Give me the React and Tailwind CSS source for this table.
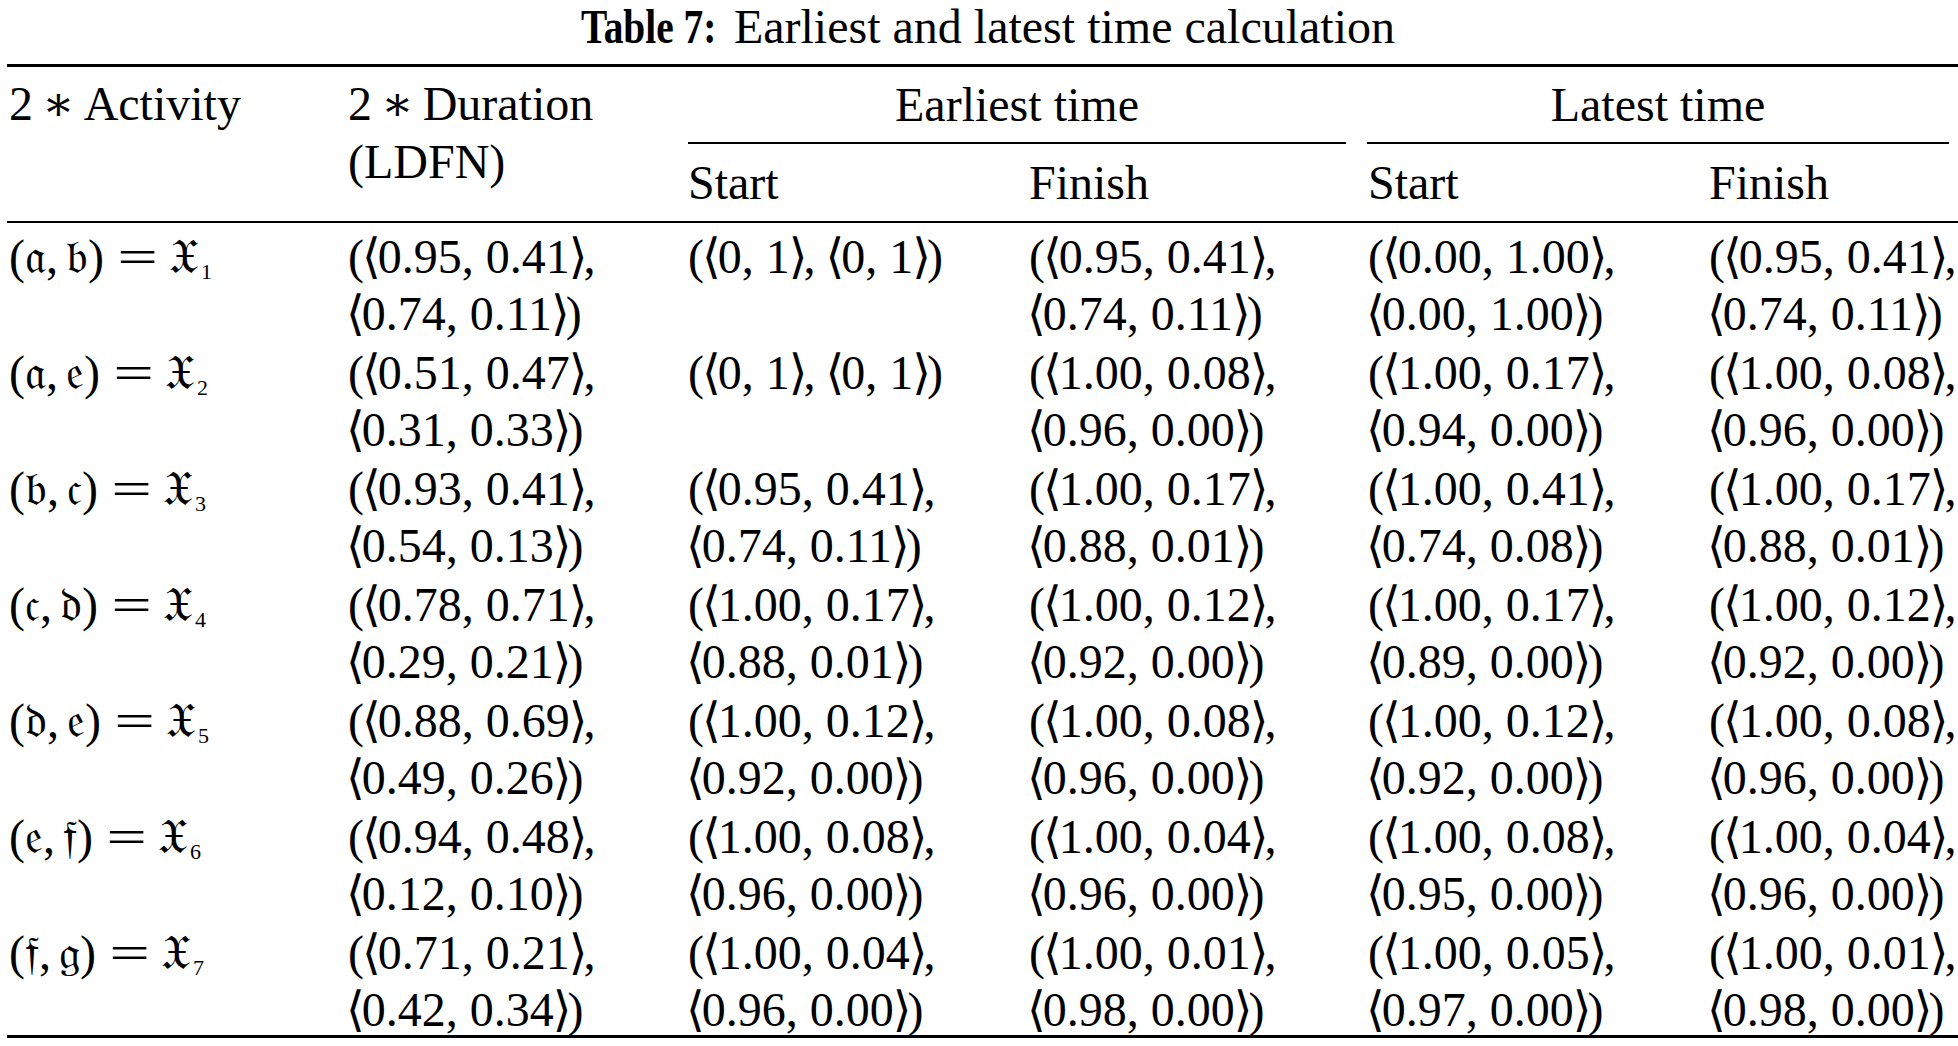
import React from "react"

const pair = (a, b, c, d) => [`(⟨${a}, ${b}⟩,`, `⟨${c}, ${d}⟩)`]

const rows = [
  {
    act: ["𝔞", "𝔟"], n: "1",
    cells: [pair("0.95", "0.41", "0.74", "0.11"), ["(⟨0, 1⟩, ⟨0, 1⟩)"], pair("0.95", "0.41", "0.74", "0.11"), pair("0.00", "1.00", "0.00", "1.00"), pair("0.95", "0.41", "0.74", "0.11")],
  },
  {
    act: ["𝔞", "𝔢"], n: "2",
    cells: [pair("0.51", "0.47", "0.31", "0.33"), ["(⟨0, 1⟩, ⟨0, 1⟩)"], pair("1.00", "0.08", "0.96", "0.00"), pair("1.00", "0.17", "0.94", "0.00"), pair("1.00", "0.08", "0.96", "0.00")],
  },
  {
    act: ["𝔟", "𝔠"], n: "3",
    cells: [pair("0.93", "0.41", "0.54", "0.13"), pair("0.95", "0.41", "0.74", "0.11"), pair("1.00", "0.17", "0.88", "0.01"), pair("1.00", "0.41", "0.74", "0.08"), pair("1.00", "0.17", "0.88", "0.01")],
  },
  {
    act: ["𝔠", "𝔡"], n: "4",
    cells: [pair("0.78", "0.71", "0.29", "0.21"), pair("1.00", "0.17", "0.88", "0.01"), pair("1.00", "0.12", "0.92", "0.00"), pair("1.00", "0.17", "0.89", "0.00"), pair("1.00", "0.12", "0.92", "0.00")],
  },
  {
    act: ["𝔡", "𝔢"], n: "5",
    cells: [pair("0.88", "0.69", "0.49", "0.26"), pair("1.00", "0.12", "0.92", "0.00"), pair("1.00", "0.08", "0.96", "0.00"), pair("1.00", "0.12", "0.92", "0.00"), pair("1.00", "0.08", "0.96", "0.00")],
  },
  {
    act: ["𝔢", "𝔣"], n: "6",
    cells: [pair("0.94", "0.48", "0.12", "0.10"), pair("1.00", "0.08", "0.96", "0.00"), pair("1.00", "0.04", "0.96", "0.00"), pair("1.00", "0.08", "0.95", "0.00"), pair("1.00", "0.04", "0.96", "0.00")],
  },
  {
    act: ["𝔣", "𝔤"], n: "7",
    cells: [pair("0.71", "0.21", "0.42", "0.34"), pair("1.00", "0.04", "0.96", "0.00"), pair("1.00", "0.01", "0.98", "0.00"), pair("1.00", "0.05", "0.97", "0.00"), pair("1.00", "0.01", "0.98", "0.00")],
  },
]

const cols = "grid grid-cols-[339px_340px_341px_339px_341px_262px]"

// angle brackets come from a fallback font and run wide, so pull them in a bit
const Math = ({ text }) =>
  text.split(/([⟨⟩])/).map((part, i) =>
    part === "⟨" ? (
      <span key={i} className="-ml-[2px] tracking-[-3px]">⟨</span>
    ) : part === "⟩" ? (
      <span key={i} className="-ml-[1px] tracking-[-4px]">⟩</span>
    ) : (
      <React.Fragment key={i}>{part}</React.Fragment>
    )
  )

const Star = () => <span className="mx-[9px]">∗</span>

const Activity = ({ act, n }) => (
  <span>
    ({act[0]},<span className="ml-[8px]">{act[1]}</span>)
    <span className="ml-[20px] mr-[14px] inline-block scale-x-[1.5]">=</span>
    <span className="ml-[4px]">𝔛</span>
    <sub className="ml-[3px] text-[22px] leading-none">{n}</sub>
  </span>
)

export default function App() {
  return (
    <div className="w-[1958px] h-[1046px] overflow-hidden bg-white text-black font-['Liberation_Serif','DejaVu_Serif','DejaVu_Sans',serif] text-[48px]">
      <div className="ml-[7px] w-[1962px]">
        <p className="text-center leading-[54px] whitespace-nowrap">
          <span className="inline-block font-bold scale-x-[0.82] origin-left -mr-[29px]">Table 7:</span>
          <span className="ml-[17px]">Earliest and latest time calculation</span>
        </p>

        <div className="mt-[10px] border-t-[3px] border-b-[3px] border-black">
          {/* header */}
          <div className={`${cols} border-b-2 border-black leading-[58px] whitespace-nowrap`}>
            <div className="row-span-2 pl-[2px] pt-[8px]">
              2<Star />Activity
            </div>
            <div className="row-span-2 pl-[2px] pt-[8px]">
              2<Star />Duration
              <br />
              (LDFN)
            </div>
            <div className="col-span-2 h-[77px] ml-[2px] mr-[20px] border-b-2 border-black flex items-center justify-center">
              Earliest time
            </div>
            <div className="col-span-2 h-[77px] ml-[1px] mr-[20px] border-b-2 border-black flex items-center justify-center">
              Latest time
            </div>
            <div className="h-[77px] pl-[2px] flex items-center">Start</div>
            <div className="h-[77px] pl-[2px] flex items-center">Finish</div>
            <div className="h-[77px] pl-[2px] flex items-center">Start</div>
            <div className="h-[77px] pl-[2px] flex items-center">Finish</div>
          </div>

          {/* body */}
          {rows.map((row, i) => (
            <div key={i} className={`${cols} h-[116px] pt-[5px] leading-[57px] whitespace-nowrap`}>
              <div className="pl-[2px]">
                <Activity act={row.act} n={row.n} />
              </div>
              {row.cells.map((lines, j) => (
                <div key={j} className="pl-[2px]">
                  {lines.map((t, k) => (
                    <div key={k}>
                      <Math text={t} />
                    </div>
                  ))}
                </div>
              ))}
            </div>
          ))}
        </div>
      </div>
    </div>
  )
}
